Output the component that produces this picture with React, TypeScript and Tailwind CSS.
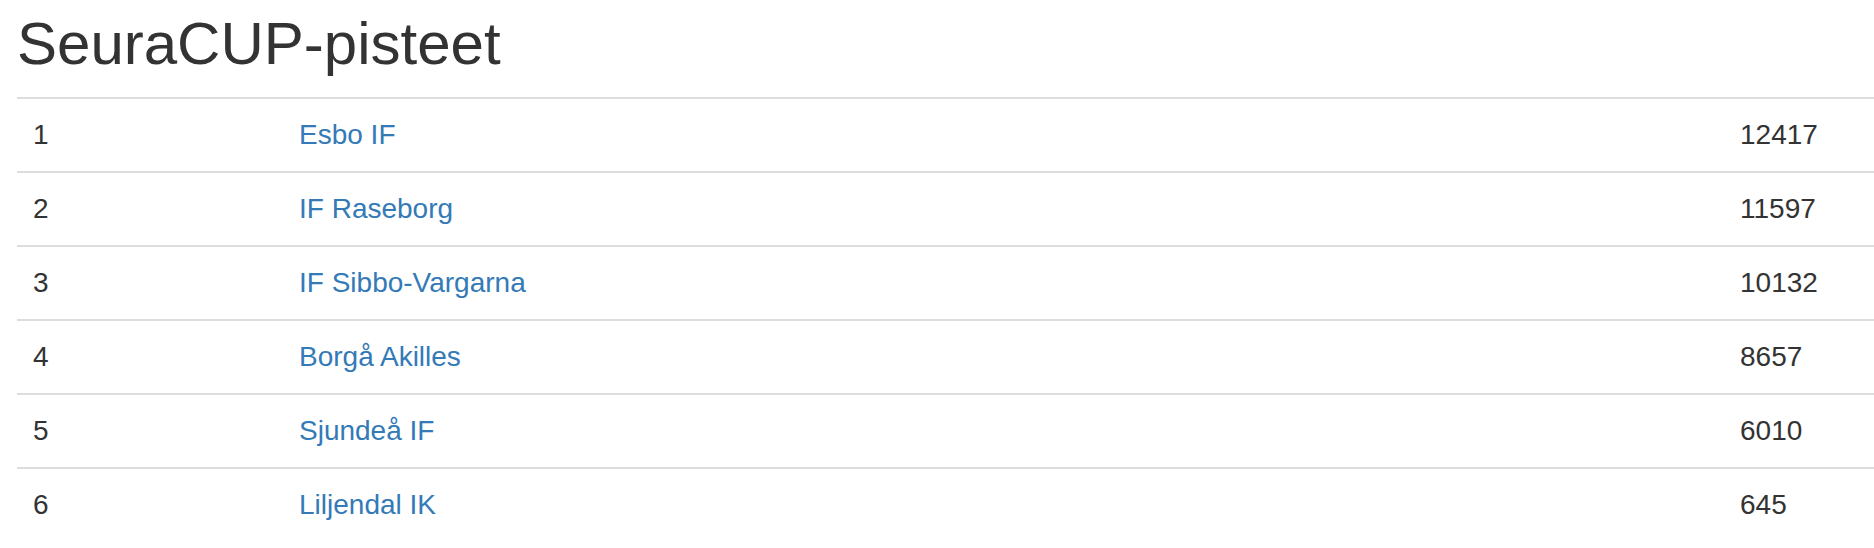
const rows = [
  { rank: 1, club: "Esbo IF", points: 12417 },
  { rank: 2, club: "IF Raseborg", points: 11597 },
  { rank: 3, club: "IF Sibbo-Vargarna", points: 10132 },
  { rank: 4, club: "Borgå Akilles", points: 8657 },
  { rank: 5, club: "Sjundeå IF", points: 6010 },
  { rank: 6, club: "Liljendal IK", points: 645 },
]

export default function App() {
  return (
    <div className="min-h-[548px] bg-white pt-[11px] pl-[17px] font-['Liberation_Sans',Arial,sans-serif] text-[#333]">
      <h2 className="mb-[20px] text-[60px] font-normal leading-[66px]">SeuraCUP-pisteet</h2>
      <table className="w-full border-collapse text-left text-[28px] leading-[40px]">
        <tbody>
          {rows.map((r) => (
            <tr key={r.rank}>
              <td className="w-[266px] border-t-2 border-[#ddd] p-[16px] align-top">{r.rank}</td>
              <td className="border-t-2 border-[#ddd] p-[16px] align-top">
                <a href="#" className="text-[#337ab7] no-underline">
                  {r.club}
                </a>
              </td>
              <td className="w-[150px] border-t-2 border-[#ddd] p-[16px] align-top">{r.points}</td>
            </tr>
          ))}
        </tbody>
      </table>
    </div>
  )
}
